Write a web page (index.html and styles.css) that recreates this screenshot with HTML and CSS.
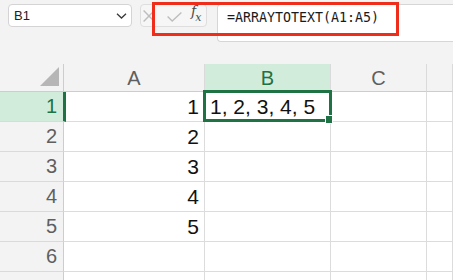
FILE: index.html
```html
<!DOCTYPE html>
<html lang="en">
<head>
    <meta charset="UTF-8">
    <meta name="viewport" content="width=device-width, initial-scale=1.0">
    <title>ARRAYTOTEXT</title>
    <link rel="stylesheet" href="styles.css">
</head>
<body>
    <div class="toolbar">
        <div class="name-box">
            <span>B1</span>
            <svg class="chevron" width="11" height="6" viewBox="0 0 11 6">
                <path d="M1 0.8 L5.5 5 L10 0.8" fill="none" stroke="#3a3a3a" stroke-width="1.3"/>
            </svg>
        </div>
        <div class="fx-buttons">
            <svg class="btn-x" width="12" height="12" viewBox="0 0 12 12">
                <path d="M0.6 0.6 L11.4 11.4 M11.4 0.6 L0.6 11.4" stroke="#bdbdbd" stroke-width="1.4"/>
            </svg>
            <svg class="btn-ok" width="15" height="10" viewBox="0 0 15 10">
                <path d="M0.6 4.6 L5.2 9 L14.4 0.6" fill="none" stroke="#bdbdbd" stroke-width="1.4"/>
            </svg>
            <span class="fx"><i>f</i><sub>x</sub></span>
        </div>
        <div class="formula-input">=ARRAYTOTEXT(A1:A5)</div>
        <div class="highlight"></div>
    </div>

    <div class="sheet">
        <div class="corner"><div class="triangle"></div></div>
        <div class="col-head">A</div>
        <div class="col-head active">B</div>
        <div class="col-head">C</div>
        <div class="col-head"></div>

        <div class="row-head active">1</div>
        <div class="cell num">1</div>
        <div class="cell">1, 2, 3, 4, 5</div>
        <div class="cell"></div>
        <div class="cell"></div>

        <div class="row-head">2</div>
        <div class="cell num">2</div>
        <div class="cell"></div>
        <div class="cell"></div>
        <div class="cell"></div>

        <div class="row-head">3</div>
        <div class="cell num">3</div>
        <div class="cell"></div>
        <div class="cell"></div>
        <div class="cell"></div>

        <div class="row-head">4</div>
        <div class="cell num">4</div>
        <div class="cell"></div>
        <div class="cell"></div>
        <div class="cell"></div>

        <div class="row-head">5</div>
        <div class="cell num">5</div>
        <div class="cell"></div>
        <div class="cell"></div>
        <div class="cell"></div>

        <div class="row-head">6</div>
        <div class="cell"></div>
        <div class="cell"></div>
        <div class="cell"></div>
        <div class="cell"></div>

        <!-- row 7 only peeks in at the bottom edge -->
        <div class="row-head"></div>
        <div class="cell"></div>
        <div class="cell"></div>
        <div class="cell"></div>
        <div class="cell"></div>

        <div class="selection"><div class="handle"></div></div>
    </div>
</body>
</html>
```

FILE: styles.css
```css
body {
    margin: 0;
    font-family: "Liberation Sans", Arial, sans-serif;
    background-color: #f3f3f3;
    overflow: hidden;
    width: 453px;
    height: 280px;
}
.toolbar {
    position: relative;
    display: flex;
    align-items: flex-start;
    height: 64px;
    padding: 4px 0 0 8px;
    box-sizing: border-box;
}
.name-box {
    display: flex;
    align-items: center;
    justify-content: space-between;
    flex-shrink: 0;
    width: 124px;
    height: 23px;
    padding: 0 4px 0 5px;
    box-sizing: border-box;
    background-color: #fff;
    border: 1px solid #d4d4d4;
    border-radius: 4px;
    font-size: 13px;
    color: #222;
}
.chevron {
    margin-top: 1px;
}
.fx-buttons {
    display: flex;
    align-items: center;
    flex-shrink: 0;
    width: 67px;
    height: 23px;
    margin-left: 8px;
    padding-left: 2px;
    box-sizing: border-box;
    border: 1px solid #dedede;
    border-radius: 4px;
    background-color: #f6f6f6;
}
.fx-buttons svg {
    flex-shrink: 0;
}
.btn-x {
    margin-right: 12px;
}
.btn-ok {
    margin-right: 9px;
    margin-top: 2px;
}
.fx {
    font-family: "DejaVu Serif", "Liberation Serif", serif;
    font-size: 14px;
    color: #4a4a4a;
    line-height: 1;
    margin-top: -4px;
    white-space: nowrap;
}
.fx sub {
    font-size: 11px;
    font-style: italic;
    vertical-align: -5px;
    margin-left: -1px;
}
.formula-input {
    flex: 1;
    height: 38px;
    margin-left: 10px;
    padding: 5px 0 0 9px;
    box-sizing: border-box;
    background-color: #fff;
    border: 1px solid #d6d6d6;
    border-right: none;
    border-radius: 4px 0 0 4px;
    font-family: "DejaVu Sans Mono", "Liberation Mono", monospace;
    font-size: 13.3px;
    color: #1a1a1a;
}
.highlight {
    position: absolute;
    left: 152px;
    top: 2px;
    width: 247px;
    height: 34px;
    border: 3px solid #ee2e1a;
    box-sizing: border-box;
}
.sheet {
    position: relative;
    display: grid;
    grid-template-columns: 64px 141px 126px 96px 1fr;
    grid-template-rows: 28px repeat(7, 30px);
    font-size: 20px;
}
.corner {
    position: relative;
    border-right: 1px solid #cdcdcd;
    border-bottom: 1px solid #cdcdcd;
}
.triangle {
    position: absolute;
    right: 4px;
    bottom: 5px;
    width: 0;
    height: 0;
    border-left: 19px solid transparent;
    border-bottom: 19px solid #b6b6b6;
}
.col-head {
    display: flex;
    align-items: center;
    justify-content: center;
    color: #5f5f5f;
    border-right: 1px solid #dadada;
    border-bottom: 1px solid #cdcdcd;
    padding-top: 1px;
}
.col-head.active {
    background-color: #d2ecdc;
    color: #1f7244;
}
.row-head {
    display: flex;
    align-items: center;
    justify-content: flex-end;
    padding-right: 6px;
    color: #5f5f5f;
    border-right: 1px solid #cdcdcd;
    border-bottom: 1px solid #dadada;
}
.row-head.active {
    background-color: #d2ecdc;
    color: #1f7244;
    border-right: 3px solid #1f7244;
    margin-right: -2px;
    position: relative;
}
.cell {
    display: flex;
    align-items: center;
    padding-left: 5px;
    background-color: #fff;
    color: #111;
    border-right: 1px solid #dcdcdc;
    border-bottom: 1px solid #dcdcdc;
    white-space: nowrap;
    font-size: 21px;
}
.cell.num {
    justify-content: flex-end;
    padding-right: 5px;
}
.selection {
    position: absolute;
    left: 203px;
    top: 26px;
    width: 129px;
    height: 32px;
    border: 3px solid #1f7244;
    box-sizing: border-box;
}
.handle {
    position: absolute;
    right: -4px;
    bottom: -5px;
    width: 6px;
    height: 7px;
    background-color: #1f7244;
    border: 1px solid #fff;
}
```
